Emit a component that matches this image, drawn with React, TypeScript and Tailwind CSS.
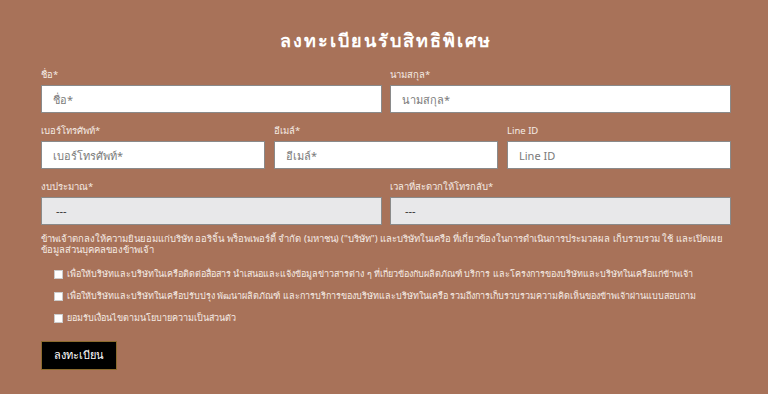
export default function App() {
    const font = { fontFamily: '"Noto Sans", "Liberation Sans", Tahoma, sans-serif' };
    const label = 'block text-[9.5px] leading-[12px] text-[#f5ebe4] mb-[4px] h-[12px]';
    const input =
        'w-full h-[28px] bg-white border border-[#8a8a8a] px-[11px] text-[11px] text-[#333] placeholder:text-[#7a7a7a] outline-none';
    const select =
        'w-full h-[28px] bg-[#e8e8ea] border border-[#8a8a8a] px-[14px] text-[11px] text-[#333] flex items-center';

    const consents = [
        'เพื่อให้บริษัทและบริษัทในเครือติดต่อสื่อสาร นำเสนอและแจ้งข้อมูลข่าวสารต่าง ๆ ที่เกี่ยวข้องกับผลิตภัณฑ์ บริการ และโครงการของบริษัทและบริษัทในเครือแก่ข้าพเจ้า',
        'เพื่อให้บริษัทและบริษัทในเครือปรับปรุง พัฒนาผลิตภัณฑ์ และการบริการของบริษัทและบริษัทในเครือ รวมถึงการเก็บรวบรวมความคิดเห็นของข้าพเจ้าผ่านแบบสอบถาม',
        'ยอมรับเงื่อนไขตามนโยบายความเป็นส่วนตัว',
    ];

    return (
        <div className="w-[768px] h-[394px] bg-[#a87259] overflow-hidden" style={font}>
            <div className="ml-[41px] pt-[28px] w-[690px]">
                <h1 className="text-center text-white font-bold text-[18px] leading-[24px] tracking-[2px] mb-[17px]">
                    ลงทะเบียนรับสิทธิพิเศษ
                </h1>

                <div className="grid grid-cols-2 gap-x-[8px]">
                    <div>
                        <label className={label}>ชื่อ*</label>
                        <input className={input} placeholder="ชื่อ*" />
                    </div>
                    <div>
                        <label className={label}>นามสกุล*</label>
                        <input className={input} placeholder="นามสกุล*" />
                    </div>
                </div>

                <div className="grid grid-cols-3 gap-x-[9px] mt-[12px]">
                    <div>
                        <label className={label}>เบอร์โทรศัพท์*</label>
                        <input className={input} placeholder="เบอร์โทรศัพท์*" />
                    </div>
                    <div>
                        <label className={label}>อีเมล์*</label>
                        <input className={input} placeholder="อีเมล์*" />
                    </div>
                    <div>
                        <label className={label}>Line ID</label>
                        <input className={input} placeholder="Line ID" />
                    </div>
                </div>

                <div className="grid grid-cols-2 gap-x-[8px] mt-[12px]">
                    <div>
                        <label className={label}>งบประมาณ*</label>
                        <div className={select}>---</div>
                    </div>
                    <div>
                        <label className={label}>เวลาที่สะดวกให้โทรกลับ*</label>
                        <div className={select}>---</div>
                    </div>
                </div>

                <p className="text-[9.5px] leading-[11px] text-[#f5ebe4] mt-[8px]">
                    ข้าพเจ้าตกลงให้ความยินยอมแก่บริษัท ออริจิ้น พร็อพเพอร์ตี้ จำกัด (มหาชน) ("บริษัท") และบริษัทในเครือ ที่เกี่ยวข้องในการดำเนินการประมวลผล เก็บรวบรวม ใช้ และเปิดเผยข้อมูลส่วนบุคคลของข้าพเจ้า
                </p>

                <div className="mt-[13px] pl-[13px] flex flex-col gap-[10px]">
                    {consents.map((c) => (
                        <label key={c} className="flex items-center gap-[4px] text-[9px] leading-[12px] text-[#f5ebe4]">
                            <span className="w-[9px] h-[9px] bg-white border border-[#ccc] shrink-0" />
                            <span>{c}</span>
                        </label>
                    ))}
                </div>

                <button className="mt-[17px] h-[29px] px-[12px] bg-black text-white text-[11px] border border-[#8b6a2e]">
                    ลงทะเบียน
                </button>
            </div>
        </div>
    );
}
